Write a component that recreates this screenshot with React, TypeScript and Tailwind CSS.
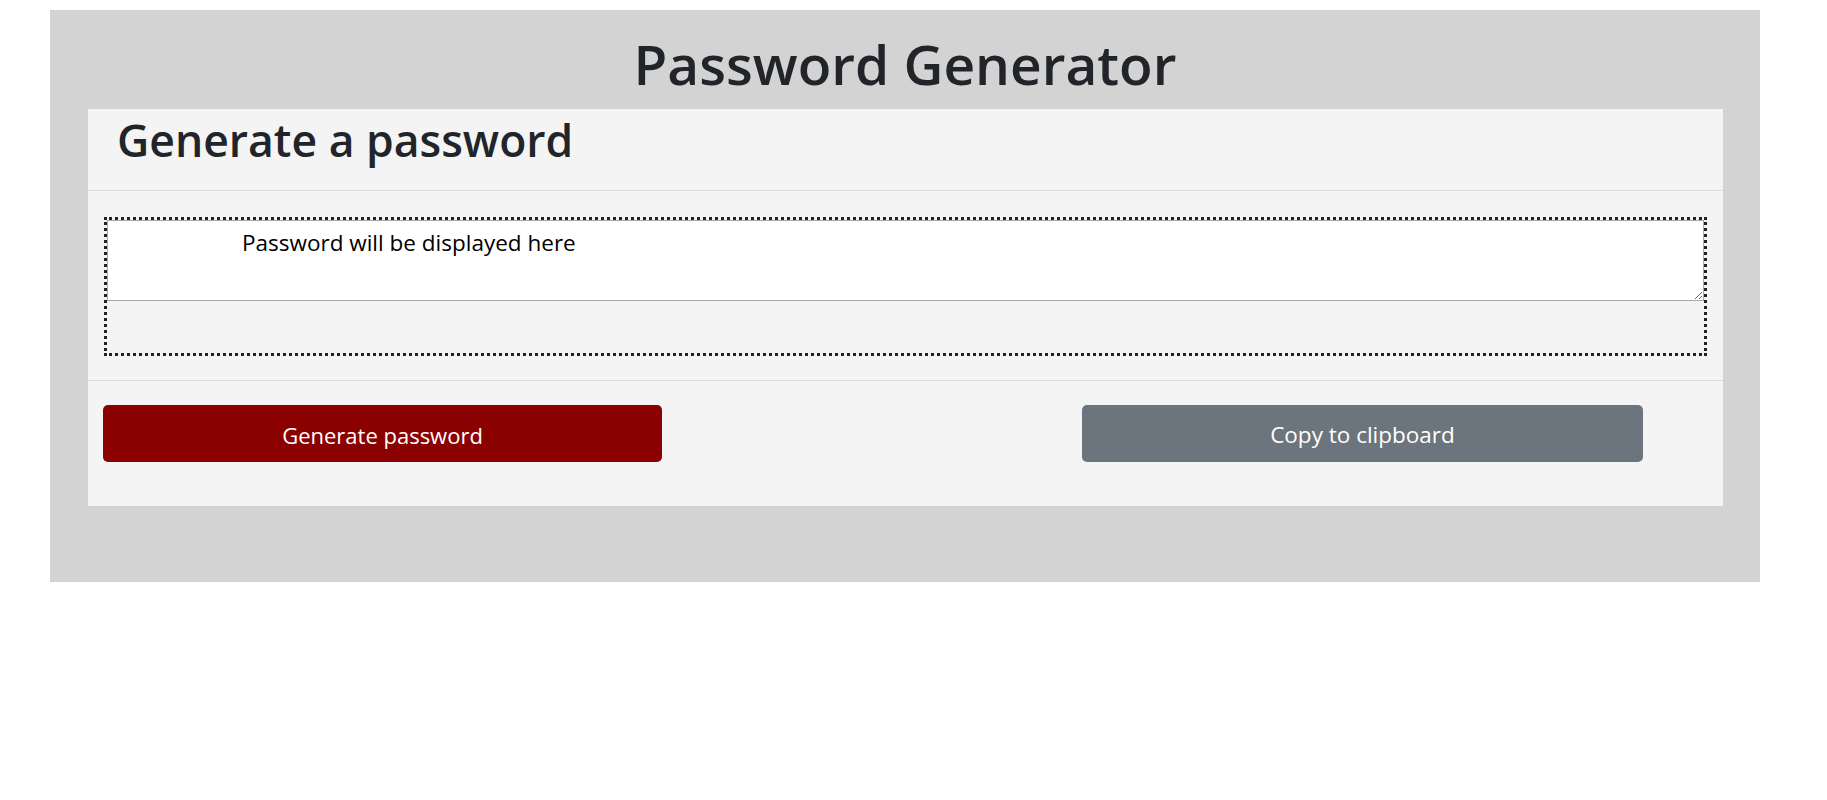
import React from "react";

export default function App() {
  return (
    <div className="min-h-[800px] bg-white pt-[10px] pl-[50px]" style={{ fontFamily: '"Open Sans", "Noto Sans", sans-serif' }}>
      <div className="w-[1710px] h-[572px] bg-[#d3d3d3]">
        <div className="h-[99px] pt-[21px] text-center">
          <h1 className="text-[55px] leading-[1.2] font-semibold text-[#212529]">Password Generator</h1>
        </div>
        <div className="ml-[38px] w-[1635px] bg-[#f4f4f4]">
          <div className="h-[82px] border-b border-[#dcdcdc] pl-[29px] pt-[4px]">
            <h2 className="text-[44.5px] leading-[1.2] font-semibold text-[#212529]">Generate a password</h2>
          </div>
          <div className="h-[189px] px-[16px] pt-[26px]">
            <div className="h-[139px] border-[3px] border-dotted border-[#222222]">
              <textarea
                readOnly
                defaultValue="Password will be displayed here"
                className="block w-full h-[81px] bg-white border border-[#a9a9a9] pl-[134px] pt-[7px] text-[22.5px] leading-[1.3] text-black outline-none"
                style={{ fontFamily: '"Open Sans", "Noto Sans", sans-serif' }}
              />
            </div>
          </div>
          <div className="h-[126px] border-t border-[#dcdcdc] pl-[15px] pt-[24px] flex items-start">
            <button className="w-[559px] h-[57px] pt-[3px] rounded-[5px] bg-[#8b0000] text-white text-[22px] flex items-center justify-center">
              Generate password
            </button>
            <button className="ml-[420px] w-[561px] h-[57px] pt-[3px] rounded-[5px] bg-[#6c757d] text-white text-[22.5px] flex items-center justify-center">
              Copy to clipboard
            </button>
          </div>
        </div>
      </div>
    </div>
  );
}
